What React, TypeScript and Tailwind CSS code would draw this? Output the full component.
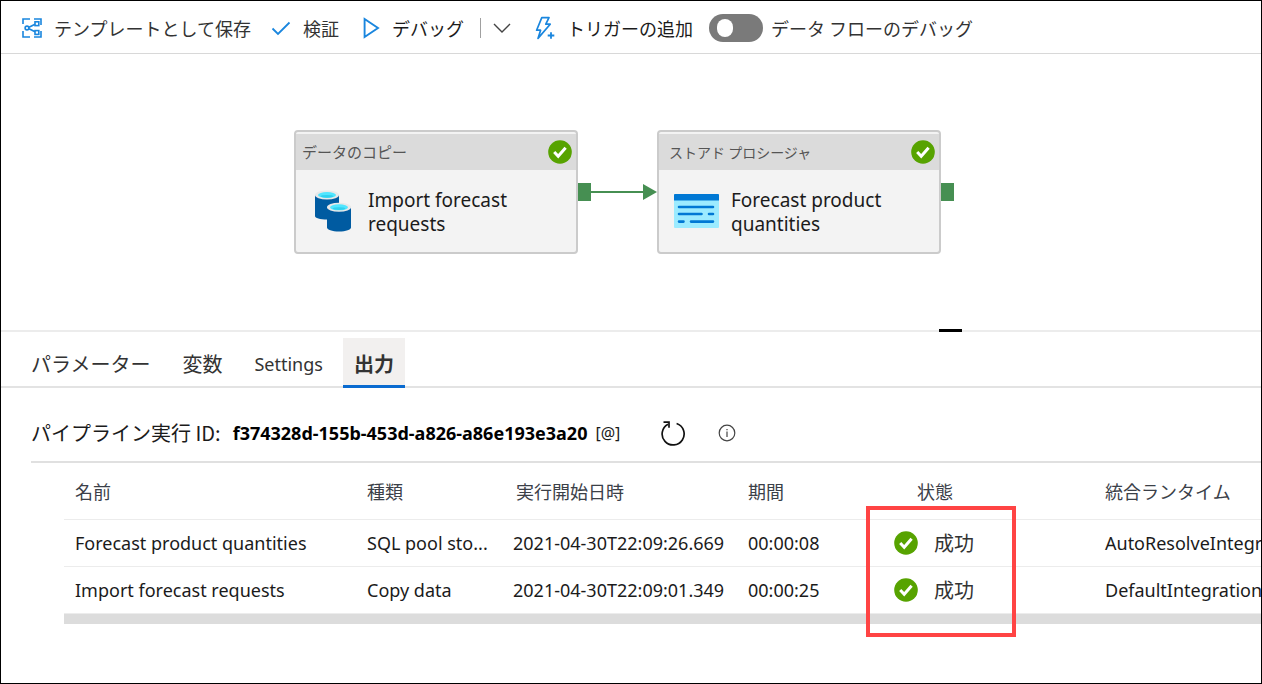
import React from "react";

const LATIN = "font-['Noto_Sans','Noto_Sans_CJK_JP',sans-serif]";
const JP = "font-['Noto_Sans_CJK_JP',sans-serif]";

function TemplateIcon() {
  return (
    <svg width="20" height="20" viewBox="0 0 20 20" fill="none" stroke="#1a86de" strokeWidth="1.6" aria-hidden="true">
      <path d="M1 6V1h7M12 1h7v6M1 13v6h7M12 19h7v-6" />
      <circle cx="5" cy="10" r="1.9" />
      <rect x="13" y="3.8" width="3.8" height="3.8" />
      <rect x="13" y="12.6" width="3.8" height="3.8" />
      <path d="M7 9.2 13 6.2M7 10.8l6 3" />
    </svg>
  );
}

function CheckIcon() {
  return (
    <svg width="20" height="20" viewBox="0 0 20 20" fill="none" stroke="#1a86de" strokeWidth="1.8" aria-hidden="true">
      <path d="M1.5 10.5 7 16 18.5 4.5" />
    </svg>
  );
}

function PlayIcon() {
  return (
    <svg width="17" height="22" viewBox="0 0 17 22" fill="none" stroke="#1a86de" strokeWidth="1.9" aria-hidden="true">
      <path d="M1.6 2v18L15 11z" />
    </svg>
  );
}

function ChevronIcon() {
  return (
    <svg width="18" height="18" viewBox="0 0 18 18" fill="none" stroke="#444" strokeWidth="1.4" aria-hidden="true">
      <path d="M1 5l8 8 8-8" />
    </svg>
  );
}

function TriggerIcon() {
  return (
    <svg width="20" height="24" viewBox="0 0 20 24" fill="none" stroke="#1a86de" strokeWidth="1.7" aria-hidden="true">
      <path d="M6.8 1.600h7.200L10.800 8.200h4.400L3 22.400 5.600 14.200H1.600z" strokeLinejoin="round" />
      <path d="M16 16.200v6.600M12.700 19.500h6.600" strokeWidth="1.800" />
    </svg>
  );
}

function SuccessIcon() {
  return (
    <svg width="24" height="24" viewBox="0 0 24 24" className="shrink-0" aria-hidden="true">
      <circle cx="12" cy="12" r="11.8" fill="#57a300" />
      <path d="M6.2 12l4 4.200 7.400-8.400" fill="none" stroke="#fff" strokeWidth="3" />
    </svg>
  );
}

function DatabasesIcon() {
  return (
    <svg width="38" height="42" viewBox="0 0 38 42" aria-hidden="true">
      <path d="M1 5v21c0 2 5 3.600 12 3.600s12-1.600 12-3.600V5z" fill="#005ba1" />
      <ellipse cx="13" cy="5" rx="12" ry="4.500" fill="#e8e8e8" />
      <ellipse cx="13" cy="5" rx="9" ry="3" fill="#50e6ff" />
      <ellipse cx="13" cy="6.300" rx="6.500" ry="1.400" fill="#32d0ee" />
      <path d="M13 17.500v20c0 2.200 5 4 12 4s12-1.800 12-4v-20z" fill="#005ba1" />
      <ellipse cx="25" cy="17.300" rx="12" ry="4.500" fill="#e8e8e8" />
      <ellipse cx="25" cy="17.300" rx="9" ry="3" fill="#50e6ff" />
      <ellipse cx="25" cy="18.600" rx="6.500" ry="1.400" fill="#32d0ee" />
    </svg>
  );
}

function ProcedureIcon() {
  return (
    <svg width="45" height="34" viewBox="0 0 45 34" aria-hidden="true">
      <rect width="45" height="34" rx="1" fill="#9cebff" />
      <path d="M0 6.500V1a1 1 0 0 1 1-1h43a1 1 0 0 1 1 1v5.500z" fill="#0078d4" />
      <path d="M5 13h34M5 20h22.500M35 20h4M5 27.600h4.500M17 27.600h22" stroke="#0078d4" strokeWidth="2.600" strokeLinecap="round" />
    </svg>
  );
}

function RefreshIcon() {
  return (
    <svg width="26" height="26" viewBox="0 0 26 26" fill="none" stroke="#111" strokeWidth="1.7" aria-hidden="true">
      <path d="M16.600 3.500A11 11 0 1 1 8 4.200" />
      <path d="M3.500 2.200H9v5.600" />
    </svg>
  );
}

function InfoIcon() {
  return (
    <svg width="18" height="18" viewBox="0 0 18 18" fill="none" stroke="#444" strokeWidth="1.2" aria-hidden="true">
      <circle cx="9" cy="9" r="7.800" />
      <path d="M9 7.500v5.500M9 5v1.300" />
    </svg>
  );
}

function ActivityNode({ kind, title, icon, place, kindClass }: {
  kind: string;
  title: string;
  icon: React.ReactNode;
  place: string;
  kindClass: string;
}) {
  return (
    <article className={`absolute top-[76px] w-[284px] rounded border-2 border-[#cbcbcb] bg-[#f3f3f3] ${place}`}>
      <header className="mt-0.5 flex h-9 items-center justify-between bg-[#dbdbdb] pr-1">
        <span className={`text-[#555] ${JP} ${kindClass}`}>{kind}</span>
        <SuccessIcon />
      </header>
      <div className="flex h-[82px] items-center gap-3 pl-3.5">
        <span className="flex w-[46px] shrink-0 justify-center">{icon}</span>
        <h2 className="w-44 pt-0.5 text-[19px] leading-6 text-[#1b1b1b]">{title}</h2>
      </div>
    </article>
  );
}

const RUNS = [
  { name: "Forecast product quantities", type: "SQL pool sto...", start: "2021-04-30T22:09:26.669", duration: "00:00:08", runtime: "AutoResolveIntegrationRuntime" },
  { name: "Import forecast requests", type: "Copy data", start: "2021-04-30T22:09:01.349", duration: "00:00:25", runtime: "DefaultIntegrationRuntime" },
];

export default function App() {
  return (
    <div className={`flex min-h-screen flex-col overflow-hidden border border-black bg-white text-[#1b1b1b] ${LATIN}`}>
      <div role="toolbar" className={`flex h-[53px] items-center whitespace-nowrap border-b border-[#d8d8d8] pl-[21px] pt-0.5 text-lg ${JP}`}>
        <button className="flex items-center gap-3 text-[#333]"><TemplateIcon />テンプレートとして保存</button>
        <button className="ml-5 flex items-center gap-3 text-[#333]"><CheckIcon />検証</button>
        <button className="ml-6 flex items-center gap-3"><PlayIcon />デバッグ</button>
        <span className="ml-4 h-5 w-px bg-[#a0a0a0]" />
        <button className="ml-3" aria-label="デバッグ オプション"><ChevronIcon /></button>
        <button className="ml-6 flex items-center gap-3"><TriggerIcon />トリガーの追加</button>
        <label className="ml-4 flex items-center gap-2 text-[#333]">
          <span className="relative flex h-7 w-[54px] items-center rounded-full bg-[#7a7a7a]">
            <input type="checkbox" role="switch" className="peer absolute inset-0 m-0 appearance-none" />
            <span className="pointer-events-none ml-2 h-[18px] w-4 rounded-full bg-white peer-checked:ml-8" />
          </span>
          データ フローのデバッグ
        </label>
      </div>

      <main className="relative h-[276px]">
        <ActivityNode kind="データのコピー" title="Import forecast requests" icon={<DatabasesIcon />} place="left-[293px]" kindClass="pl-1.5 text-[15px]" />
        <ActivityNode kind="ストアド プロシージャ" title="Forecast product quantities" icon={<ProcedureIcon />} place="left-[656px]" kindClass="pl-2.5 text-sm" />
        <svg width="378" height="20" viewBox="0 0 378 20" className="absolute left-[577px] top-[128px]" aria-hidden="true">
          <rect y="1" width="13" height="18" fill="#468f52" />
          <path d="M13 10h54" stroke="#468f52" strokeWidth="2" />
          <path d="M65 2l14 8-14 8z" fill="#468f52" />
          <rect x="363" y="1" width="13" height="18" fill="#468f52" />
        </svg>
      </main>

      <section className="relative flex-1 border-t-2 border-[#ececec]">
        <span className="absolute left-[938px] top-[-3px] h-[3px] w-[23px] bg-black" />
        <div role="tablist" className="flex items-end gap-2 border-b-2 border-[#e3e3e3] pl-[18px] pt-[6px] text-xl text-[#333]">
          <button role="tab" className={`h-12 px-3 pt-1 ${JP}`}>パラメーター</button>
          <button role="tab" className={`h-12 px-3 pt-1 ${JP}`}>変数</button>
          <button role="tab" className="h-12 px-3 pt-1 text-lg">Settings</button>
          <button role="tab" aria-selected="true" className={`-mb-0.5 h-[50px] border-b-[3px] border-[#0a6bd0] bg-[#f2f0ef] px-[11px] pt-1 font-bold ${JP}`}>出力</button>
        </div>

        <div className="ml-[30px] flex h-[75px] items-center border-b-2 border-[#e0e0e0] pt-4">
          <span className={`text-xl ${JP}`}>パイプライン実行 ID:</span>
          <strong className="ml-3 text-lg text-black">f374328d-155b-453d-a826-a86e193e3a20</strong>
          <button className="ml-2 text-base" aria-label="ID のコピー">[@]</button>
          <button className="ml-10" aria-label="最新の情報に更新"><RefreshIcon /></button>
          <button className="ml-8" aria-label="情報"><InfoIcon /></button>
        </div>

        <div className="relative ml-[63px]">
          <div className="overflow-hidden border-b-10 border-[#dcdcdc]">
            <table className="w-full min-w-[1300px] table-fixed text-left text-lg">
              <colgroup>
                <col className="w-[292px]" />
                <col className="w-[146px]" />
                <col className="w-[235px]" />
                <col className="w-[146px]" />
                <col className="w-[211px]" />
                <col />
              </colgroup>
              <thead>
                <tr className={`h-14 border-b border-[#ececec] text-lg text-[#3b4048] ${JP}`}>
                  <th className="px-[11px] font-normal">名前</th>
                  <th className="px-[11px] font-normal">種類</th>
                  <th className="px-[14px] font-normal">実行開始日時</th>
                  <th className="px-[11px] font-normal">期間</th>
                  <th className="pl-[34px] font-normal">状態</th>
                  <th className="px-[11px] font-normal">統合ランタイム</th>
                </tr>
              </thead>
              <tbody>
                {RUNS.map((run) => (
                  <tr key={run.name} className="h-[47px] whitespace-nowrap border-b border-[#ececec]">
                    <td className="px-[11px]">{run.name}</td>
                    <td className="px-[11px]">{run.type}</td>
                    <td className="px-[11px]">{run.start}</td>
                    <td className="px-[11px]">{run.duration}</td>
                    <td className="px-[11px]">
                      <span className={`flex items-center gap-4 text-xl text-[#333] ${JP}`}><SuccessIcon />成功</span>
                    </td>
                    <td className="px-[11px]">{run.runtime}</td>
                  </tr>
                ))}
              </tbody>
            </table>
          </div>
          <span className="pointer-events-none absolute left-[802px] top-[43px] h-[131px] w-[150px] border-4 border-[#ff4444]" />
        </div>
      </section>
    </div>
  );
}
